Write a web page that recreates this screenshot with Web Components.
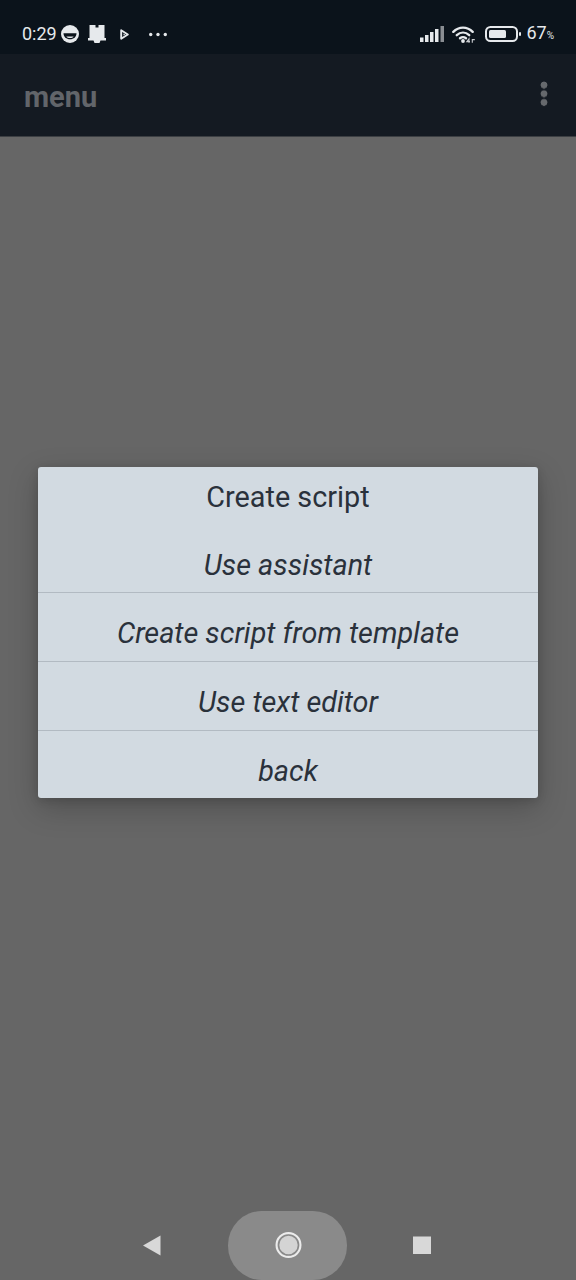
<!DOCTYPE html>
<html><head><meta charset="utf-8"><style>
html,body{margin:0;padding:0;background:#666}
body{width:576px;height:1280px;overflow:hidden;font-family:Roboto,"Liberation Sans",sans-serif}
</style></head><body>
<phone-screen>
<status-bar slot="status"></status-bar>
<app-bar slot="app"></app-bar>
<menu-dialog slot="main">
  <menu-row kind="title">Create script</menu-row>
  <menu-row kind="first">Use assistant</menu-row>
  <menu-row>Create script from template</menu-row>
  <menu-row>Use text editor</menu-row>
  <menu-row kind="last">back</menu-row>
</menu-dialog>
<nav-bar slot="nav"></nav-bar>
</phone-screen>
<script>
function def(name,html){customElements.define(name,class extends HTMLElement{constructor(){super();this.attachShadow({mode:'open'}).innerHTML=html}})}
def('phone-screen',`<style>:host{display:flex;flex-direction:column;width:576px;height:1280px;background:#666}
.main{flex:1;padding:330px 38px 0;box-sizing:border-box;min-height:0}</style>
<slot name="status"></slot><slot name="app"></slot><div class="main"><slot name="main"></slot></div><slot name="nav"></slot>`);
def('status-bar',`<style>:host{display:flex;align-items:center;justify-content:space-between;height:54px;padding:14px 22px 0 22px;box-sizing:border-box;background:#0b131b;color:#e6e9ec;font-size:18px;line-height:20px}
.l,.r{display:flex;align-items:center}svg{display:block}
.p small{font-size:10px}</style>
<div class="l"><span class="t">0:29</span>
<svg style="margin-left:4px" width="18" height="18" viewBox="0 0 18 18"><circle cx="9" cy="9" r="9" fill="#e6e9ec"/><path d="M2.500 8.300h13c0 3.800-2.900 6-6.500 6s-6.500-2.200-6.500-6z" fill="#0b131b"/><path d="M5.300 11.600h7.400c-.8 1.100-2.100 1.500-3.700 1.500s-2.900-.4-3.700-1.500z" fill="#e6e9ec"/></svg>
<svg style="margin-left:9px" width="18" height="18" viewBox="0 0 18 18"><path d="M1.500 0h6v2.500h3V0h6v13h-15z" fill="#e6e9ec"/><path d="M0 13h18v2.500h-5.500L11.500 18h-5l-1-2.500H0z" fill="#e6e9ec"/></svg>
<svg style="margin-left:14px" width="9" height="11" viewBox="0 0 9 11"><path d="M1.200 1.200 7.800 5.500 1.200 9.800z" fill="none" stroke="#e6e9ec" stroke-width="1.900" stroke-linejoin="round"/><path d="M3.500 4.500 5.300 5.500 3.500 6.500z" fill="#e6e9ec"/></svg>
<svg style="margin-left:20px" width="18" height="5" viewBox="0 0 18 5"><circle cx="1.700" cy="2.500" r="1.700" fill="#e6e9ec"/><circle cx="9" cy="2.500" r="1.700" fill="#e6e9ec"/><circle cx="16.300" cy="2.500" r="1.700" fill="#e6e9ec"/></svg></div>
<div class="r">
<svg width="24" height="16" viewBox="0 0 24 16"><rect x="0" y="11.500" width="3.500" height="4.500" fill="#e6e9ec"/><rect x="5" y="9" width="3.500" height="7" fill="#e6e9ec"/><rect x="10" y="6" width="3.500" height="10" fill="#e6e9ec"/><rect x="15" y="3" width="3.500" height="13" fill="#e6e9ec"/><rect x="20.500" y="0" width="3.500" height="16" fill="#8a8e93"/></svg>
<svg style="margin-left:8px" width="24" height="17" viewBox="0 0 24 17"><g fill="none" stroke="#e6e9ec" stroke-width="2.400" stroke-linecap="round"><path d="M1.300 5.800C6.800.2 15.200.2 20.700 5.800"/><path d="M4.800 9.200C8.500 5.800 13.500 5.800 17.200 9.200"/><path d="M8 12.300c1.900-1.500 4.100-1.500 6 0"/></g><circle cx="11" cy="15" r="1.900" fill="#e6e9ec"/><path d="M17 16.800v-4l-2.200 2.800h3.200M20.300 16.800v-3.200h2.500" fill="none" stroke="#c9ccd0" stroke-width="1.100"/></svg>
<svg style="margin-left:9px" width="36" height="16" viewBox="0 0 36 16"><rect x="1" y="1" width="31" height="14" rx="4.500" fill="none" stroke="#e6e9ec" stroke-width="2"/><rect x="4" y="4" width="17" height="8" rx="1.500" fill="#e6e9ec"/><rect x="34" y="6" width="2" height="4" rx="1" fill="#e6e9ec"/></svg>
<span class="p" style="margin-left:5px;padding-top:1px">67<small>%</small></span></div>`);
def('app-bar',`<style>:host{display:flex;align-items:center;justify-content:space-between;height:83px;padding:0 28px 3px 24px;box-sizing:border-box;background:#141a22;border-bottom:1px solid #3c3f43;color:#62656a;font-weight:700;font-size:29px}
span{margin-top:6px}
i{display:block;width:8px;height:26px;background:radial-gradient(circle at 4px 4px,#66696d 3.200px,transparent 3.700px) 0 0/8px 8.700px repeat-y}</style>
<span>menu</span><i></i>`);
def('menu-dialog',`<style>:host{display:block;width:500px;background:#d2dae1;border-radius:3px;box-shadow:0 10px 30px rgba(0,0,0,.22),0 2px 10px rgba(0,0,0,.14)}</style><slot></slot>`);
customElements.define('menu-row',class extends HTMLElement{constructor(){super();const k=this.getAttribute('kind')||'';
const m={title:'height:60px;font-style:normal;',first:'height:66px;padding-top:11px;border-bottom:1px solid #b2bac2;font-style:italic;',last:'height:67px;padding-top:12px;font-style:italic;'}[k]||'height:69px;padding-top:11px;border-bottom:1px solid #b2bac2;font-style:italic;';
this.attachShadow({mode:'open'}).innerHTML=`<style>:host{display:flex;align-items:center;justify-content:center;box-sizing:border-box;color:#2a313b;font-size:28.800px;line-height:32px;${m}}</style><slot></slot>`}});
def('nav-bar',`<style>:host{display:block;height:70px}svg{display:block}</style>
<svg width="576" height="70" viewBox="0 0 576 70"><rect x="228" y="1" width="119" height="69" rx="34" ry="34" fill="#8a8a8a"/>
<path d="M143 35.500 160.500 25.500V45.500z" fill="#d8d8d8"/>
<circle cx="288.500" cy="35" r="12" fill="#d4d4d4" stroke="#ececec" stroke-width="2" /><circle cx="288.500" cy="35" r="10" fill="#d4d4d4" stroke="#8a8a8a" stroke-width="1.600"/>
<rect x="413" y="26.500" width="18" height="17.500" fill="#d8d8d8"/></svg>`);
</script></body></html>
